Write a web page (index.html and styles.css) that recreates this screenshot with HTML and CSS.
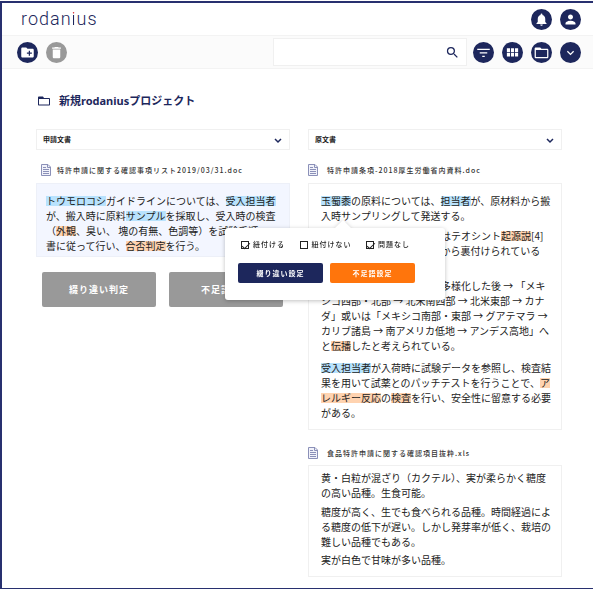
FILE: index.html
```html
<!DOCTYPE html>
<html lang="ja">
<head>
<meta charset="utf-8">
<meta name="viewport" content="width=device-width, initial-scale=1">
<title>rodanius</title>
<link rel="stylesheet" href="styles.css">
</head>
<body>
<div class="app">
  <header class="header">
    <a class="logo" href="#">rodan<span class="logo-i">i</span>us</a>
    <div class="actions">
      <button class="round" type="button" aria-label="通知">
        <svg viewBox="0 0 24 24"><path d="M12 22c1.1 0 2-.9 2-2h-4c0 1.1.9 2 2 2zm6-6v-5c0-3.070-1.640-5.640-4.500-6.320V4a1.500 1.500 0 0 0-3 0v.680C7.630 5.360 6 7.920 6 11v5l-2 2v1h16v-1l-2-2z"/></svg>
      </button>
      <button class="round" type="button" aria-label="アカウント">
        <svg viewBox="0 0 24 24"><path d="M12 12c2.210 0 4-1.790 4-4s-1.790-4-4-4-4 1.790-4 4 1.790 4 4 4zm0 2c-2.670 0-8 1.340-8 4v2h16v-2c0-2.660-5.330-4-8-4z"/></svg>
      </button>
    </div>
  </header>

  <div class="toolbar">
    <div class="actions">
      <button class="round" type="button" aria-label="新規フォルダ">
        <svg viewBox="0 0 24 24"><path d="M20 6h-8l-2-2H4c-1.110 0-1.990.890-1.990 2L2 18c0 1.110.890 2 2 2h16c1.110 0 2-.890 2-2V8c0-1.110-.890-2-2-2zm-1 8h-3v3h-2v-3h-3v-2h3V9h2v3h3v2z"/></svg>
      </button>
      <button class="round round-muted" type="button" aria-label="削除">
        <svg viewBox="0 0 24 24"><path d="M6 19c0 1.100.9 2 2 2h8c1.100 0 2-.9 2-2V7H6v12zM19 4h-3.500l-1-1h-5l-1 1H5v2h14V4z"/></svg>
      </button>
    </div>
    <div class="tools">
      <div class="search">
        <input class="search-input" type="search" aria-label="検索">
        <button class="search-button" type="button" aria-label="検索する">
          <svg viewBox="0 0 24 24"><path d="M15.500 14h-.790l-.280-.270A6.471 6.471 0 0 0 16 9.500 6.500 6.500 0 1 0 9.500 16c1.610 0 3.090-.590 4.230-1.570l.270.280v.790l5 4.990L20.490 19l-4.990-5zm-6 0C7.010 14 5 11.990 5 9.500S7.010 5 9.500 5 14 7.010 14 9.500 11.990 14 9.500 14z"/></svg>
        </button>
      </div>
      <div class="actions">
        <button class="round" type="button" aria-label="絞り込み">
          <svg viewBox="0 0 24 24"><path d="M10 19h4v-2h-4v2zM2 6v2h20V6H2zm4 7.500h12v-2H6v2z"/></svg>
        </button>
        <button class="round" type="button" aria-label="グリッド表示">
          <svg viewBox="0 0 24 24"><path d="M3 5h5v6H3zM9.500 5h5v6h-5zM16 5h5v6h-5zM3 12.500h5v6H3zM9.500 12.500h5v6h-5zM16 12.500h5v6h-5z"/></svg>
        </button>
        <button class="round" type="button" aria-label="フォルダ">
          <svg viewBox="0 0 24 24"><path d="M21 6h-9l-2-2H3c-1.100 0-2 .9-2 2v13c0 1.100.9 2 2 2h18c1.100 0 2-.9 2-2V8c0-1.100-.9-2-2-2zm0 13H3V8h18v11z"/></svg>
        </button>
        <button class="round" type="button" aria-label="メニュー">
          <svg viewBox="0 0 24 24"><path class="line" d="M7 10l5 5 5-5"/></svg>
        </button>
      </div>
    </div>
  </div>

  <main class="main">
    <h1 class="title">
      <svg class="title-icon" viewBox="0 0 24 24"><path d="M20 6h-8l-2-3H2c-1.100 0-2 .9-2 2v14c0 1.100.9 2 2 2h20c1.100 0 2-.9 2-2V8c0-1.100-.9-2-2-2zm2 13H2V8h20z"/></svg>
      新規rodaniusプロジェクト
    </h1>

    <div class="columns">
      <section class="column">
        <div class="picker">
          <select class="picker-select" aria-label="申請文書"><option>申請文書</option></select>
          <svg class="picker-arrow" viewBox="0 0 8 6"><path d="M1 1l3 3 3-3"/></svg>
        </div>
        <h2 class="file file-inset">
          <svg class="file-icon" viewBox="0 0 10 12"><path class="page" d="M.500.500h6.500l2.500 2.500v8.500h-9z"/><path class="rows" d="M2 3.500h3M2 5.500h6M2 7.500h6M2 9.500h6M6.500.500v3h3"/></svg>
          特許申請に関する確認事項リスト2019/03/31.doc
        </h2>
        <article class="doc doc-active">
          <p><mark class="blue">トウモロコシ</mark>ガイドラインについては、<mark class="blue">受入担当者</mark><br>が、搬入時に原料<mark class="blue">サンプル</mark>を採取し、受入時の検査<br>（<mark class="peach">外観</mark>、臭い、 塊の有無、色調等）を試験手順<br>書に従って行い、<mark class="peach">合否判定</mark>を行う。</p>
        </article>
        <div class="judges">
          <button class="judge" type="button">綴り違い判定</button>
          <button class="judge" type="button">不足語判定</button>
        </div>
      </section>

      <section class="column">
        <div class="picker">
          <select class="picker-select" aria-label="原文書"><option>原文書</option></select>
          <svg class="picker-arrow" viewBox="0 0 8 6"><path d="M1 1l3 3 3-3"/></svg>
        </div>
        <h2 class="file">
          <svg class="file-icon" viewBox="0 0 10 12"><path class="page" d="M.500.500h6.500l2.500 2.500v8.500h-9z"/><path class="rows" d="M2 3.500h3M2 5.500h6M2 7.500h6M2 9.500h6M6.500.500v3h3"/></svg>
          特許申請条項-2018厚生労働省内資料.doc
        </h2>
        <article class="doc doc-source">
          <p><mark class="blue">玉蜀黍</mark>の原料については、<mark class="blue">担当者</mark>が、原材料から搬<br>入時サンプリングして発送する。</p>
          <p>栽培トウモロコシの起源にはテオシント<mark class="peach">起源説</mark>[4]<br>があり、遺伝子の比較研究から裏付けられている<br>とされる。</p>
          <p>メキシコの高原で栽培種が多様化した後 → 「メキ<br>シコ西部・北部 → 北米南西部 → 北米東部 → カナ<br>ダ」或いは「メキシコ南部・東部 → グアテマラ →<br>カリブ諸島 → 南アメリカ低地 → アンデス高地」へ<br>と<mark class="peach">伝播</mark>したと考えられている。</p>
          <p><mark class="blue">受入担当者</mark>が入荷時に試験データを参照し、検査結<br>果を用いて試薬とのパッチテストを行うことで、<mark class="peach">ア<br>レルギー反応</mark>の<mark class="peach">検査</mark>を行い、安全性に留意する必要<br>がある。</p>

          <form class="popup">
            <div class="checks">
              <label class="check"><input type="checkbox" checked>紐付ける</label>
              <label class="check"><input type="checkbox">紐付けない</label>
              <label class="check"><input type="checkbox" checked>問題なし</label>
            </div>
            <div class="popup-actions">
              <button class="set set-navy" type="button">綴り違い設定</button>
              <button class="set set-orange" type="button">不足語設定</button>
            </div>
          </form>
        </article>

        <h2 class="file file-next">
          <svg class="file-icon" viewBox="0 0 10 12"><path class="page" d="M.500.500h6.500l2.500 2.500v8.500h-9z"/><path class="rows" d="M2 3.500h3M2 5.500h6M2 7.500h6M2 9.500h6M6.500.500v3h3"/></svg>
          食品特許申請に関する確認項目抜粋.xls
        </h2>
        <article class="doc doc-compact">
          <p>黄・白粒が混ざり（カクテル）、実が柔らかく糖度<br>の高い品種。生食可能。</p>
          <p>糖度が高く、生でも食べられる品種。時間経過によ<br>る糖度の低下が遅い。しかし発芽率が低く、栽培の<br>難しい品種でもある。</p>
          <p>実が白色で甘味が多い品種。</p>
        </article>
      </section>
    </div>
  </main>
</div>
</body>
</html>
```
FILE: styles.css
```css
:root {
  --navy: #1d275c;
  --line: #f0f0f0;
  --orange: #ff750c;
}

* { box-sizing: border-box; }

body {
  margin: 0;
  padding-top: 1px;
  background: #fff;
  color: #222;
  font-family: "Noto Sans CJK JP", sans-serif;
  font-size: 10px;
  line-height: 15px;
}

button, input, select { font: inherit; margin: 0; }
button { border: 0; padding: 0; cursor: pointer; }
p, h1, h2 { margin: 0; }
svg { display: block; flex: none; }

.app {
  min-height: calc(100vh - 1px);
  border: solid #28306f;
  border-width: 2px 0 1px 2px;
}

.header, .toolbar {
  display: flex;
  align-items: center;
  justify-content: space-between;
  padding: 0 12px 0 15px;
}

.header { height: 32px; padding-left: 19px; }

.toolbar {
  height: 34px;
  background: #fbfbfb;
  border: 1px solid #f3f3f3;
  border-width: 1px 0;
}

.actions { display: flex; align-items: center; gap: 8px; }
.tools { display: flex; align-items: center; gap: 6px; }

.logo {
  color: var(--navy);
  font-family: Roboto, sans-serif;
  font-size: 18px;
  font-weight: 300;
  letter-spacing: 1px;
  line-height: 20px;
  text-decoration: none;
}

.logo-i {
  background: linear-gradient(#d8232a 7px, var(--navy) 7px);
  background-clip: text;
  -webkit-background-clip: text;
  color: transparent;
}

.round {
  display: grid;
  place-items: center;
  width: 21px;
  height: 21px;
  border-radius: 50%;
  background: var(--navy);
}

.round svg { width: 15px; height: 15px; fill: #fff; }
.round .line { fill: none; stroke: #fff; stroke-width: 2; }
.round-muted { background: #999; }

.search {
  display: flex;
  align-items: center;
  width: 194px;
  height: 28px;
  padding-right: 6px;
  background: #fff;
  border: 1px solid var(--line);
}

.search-input {
  flex: 1;
  min-width: 0;
  height: 24px;
  border: 0;
  outline: 0;
  background: none;
}

.search-button { background: none; }
.search-button svg { width: 15px; height: 15px; fill: var(--navy); }

.main { padding: 24px 31px 9px 34px; }

.title {
  display: flex;
  align-items: center;
  gap: 9px;
  margin-bottom: 20px;
  padding-left: 2px;
  color: var(--navy);
  font-family: "Noto Sans", "Noto Sans CJK JP", sans-serif;
  font-size: 11px;
  line-height: 16px;
}

.title-icon { width: 12px; height: 12px; fill: var(--navy); }

.columns {
  display: grid;
  grid-template-columns: 1fr 1fr;
  align-items: start;
  gap: 18px;
}

.picker { position: relative; }

.picker-select {
  display: block;
  width: 100%;
  height: 21px;
  padding: 0 6px;
  border: 1px solid var(--line);
  border-radius: 0;
  appearance: none;
  background: #fff;
  color: #222;
  font-size: 7px;
  font-weight: 700;
}

.picker-arrow {
  position: absolute;
  top: 9px;
  right: 8px;
  width: 8px;
  height: 6px;
  pointer-events: none;
}

.picker-arrow path { fill: none; stroke: var(--navy); stroke-width: 1.500; }

.file {
  display: flex;
  align-items: center;
  gap: 9px;
  margin: 14px 0 7px;
  color: #333;
  font-size: 7px;
  font-weight: 500;
  letter-spacing: 1px;
  line-height: 12px;
}

.file-inset { gap: 6px; padding-left: 5px; }
.file-next { margin: 17px 0 6px; }
.file-icon { width: 10px; height: 12px; }
.file-icon .page { fill: #f1f2fa; stroke: #8b90b8; }
.file-icon .rows { fill: none; stroke: #8b90b8; }

.doc {
  position: relative;
  padding: 9px 0 9px 12px;
  border: 1px solid var(--line);
  white-space: nowrap;
}

.doc p + p { margin-top: 5px; }
.doc p:nth-of-type(4) { margin-top: 7px; }
.doc-active { padding: 9px 0 3px 9px; background: #f3f6ff; border-color: #edf0f8; }
.doc-compact { padding: 4px 0 9px 12px; }
.doc-compact p + p { margin-top: 4px; }
.doc-compact p:last-child { margin-top: 3px; }

mark { color: inherit; }
.blue { background: linear-gradient(#b8e2fd, #b8e2fd) center / 100% 10px no-repeat; }
.peach { background: linear-gradient(#ffd3b0, #ffd3b0) center / 100% 10px no-repeat; }

.judges {
  display: grid;
  grid-template-columns: 1fr 1fr;
  gap: 13px;
  margin-top: 15px;
  padding: 0 7px 0 6px;
}

.judge {
  height: 35px;
  border-radius: 2px;
  background: #999;
  color: #fff;
  font-size: 9px;
  font-weight: 700;
  letter-spacing: 1px;
}

.popup {
  position: absolute;
  z-index: 1;
  top: 44px;
  left: -84px;
  display: grid;
  gap: 12px;
  padding: 10px 30px 17px 13px;
  border-radius: 3px;
  background: #fff;
  filter: drop-shadow(0 1px 2px rgba(0, 0, 0, .25));
}

.popup::before {
  content: "";
  position: absolute;
  bottom: 100%;
  left: 110px;
  border: solid transparent;
  border-width: 0 8px 8px;
  border-bottom-color: #fff;
}

.checks {
  display: flex;
  justify-content: space-between;
  padding: 0 5px 0 3px;
  font-size: 7px;
  font-weight: 500;
  letter-spacing: 1px;
  line-height: 13px;
}

.check { display: flex; align-items: center; gap: 4px; }

.check input {
  width: 8px;
  height: 8px;
  border: 1px solid #222;
  appearance: none;
  display: grid;
  place-items: center;
}

.check input:checked::before {
  content: "";
  width: 7px;
  height: 3px;
  border: solid #222;
  border-width: 0 0 1px 1px;
  rotate: -45deg;
}

.popup-actions { display: flex; gap: 7px; }

.set {
  width: 85px;
  height: 20px;
  border-radius: 2px;
  color: #fff;
  font-size: 7px;
  font-weight: 700;
  letter-spacing: 1px;
}

.set-navy { background: var(--navy); }
.set-orange { background: var(--orange); }
```
